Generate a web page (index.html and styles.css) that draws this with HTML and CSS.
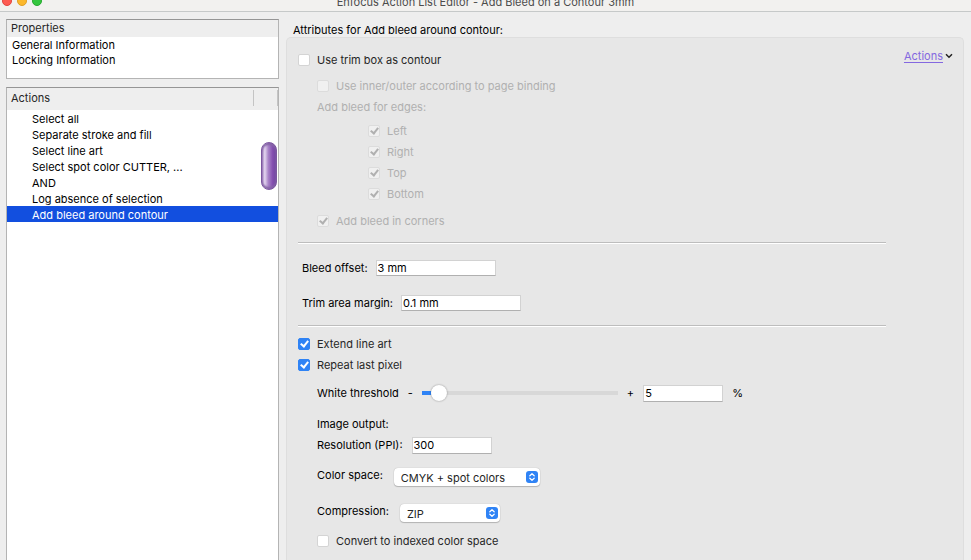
FILE: index.html
```html
<!DOCTYPE html>
<html lang="en">
<head>
    <meta charset="UTF-8">
    <meta name="viewport" content="width=device-width, initial-scale=1.0">
    <title>Enfocus Action List Editor - Add Bleed on a Contour 3mm</title>
    <link rel="stylesheet" href="styles.css">
</head>

<body>
    <!-- Title Bar -->
    <header class="titlebar">
        <div class="lights">
            <span class="light red"></span>
            <span class="light yellow"></span>
            <span class="light green"></span>
        </div>
        <h1>Enfocus Action List Editor - Add Bleed on a Contour 3mm</h1>
    </header>

    <div class="window">
        <!-- Left Side -->
        <aside class="sidebar">
            <section class="list properties">
                <h2 class="list-header">Properties</h2>
                <ul>
                    <li>General Information</li>
                    <li>Locking Information</li>
                </ul>
            </section>

            <section class="list actions">
                <h2 class="list-header">Actions</h2>
                <ul>
                    <li>Select all</li>
                    <li>Separate stroke and fill</li>
                    <li>Select line art</li>
                    <li>Select spot color CUTTER, ...</li>
                    <li>AND</li>
                    <li>Log absence of selection</li>
                    <li class="selected">Add bleed around contour</li>
                </ul>
                <div class="scroll-thumb"></div>
            </section>
        </aside>

        <!-- Attributes -->
        <main class="attributes">
            <h2>Attributes for Add bleed around contour:</h2>

            <form class="panel">
                <div class="row top">
                    <label class="check"><input type="checkbox"> Use trim box as contour</label>
                    <a class="menu-link" href="#actions"><span>Actions</span><svg width="8" height="6" viewBox="0 0 8 6"><path d="M1 1.2 L4 4.2 L7 1.2" fill="none" stroke="#222" stroke-width="1.5"/></svg></a>
                </div>

                <div class="group indent disabled">
                    <label class="check"><input type="checkbox" disabled> Use inner/outer according to page binding</label>
                    <p class="row">Add bleed for edges:</p>
                </div>
                <div class="group edges disabled">
                    <label class="check"><input type="checkbox" checked disabled> Left</label>
                    <label class="check"><input type="checkbox" checked disabled> Right</label>
                    <label class="check"><input type="checkbox" checked disabled> Top</label>
                    <label class="check"><input type="checkbox" checked disabled> Bottom</label>
                </div>
                <div class="group indent corners disabled">
                    <label class="check"><input type="checkbox" checked disabled> Add bleed in corners</label>
                </div>

                <hr>

                <div class="group offsets">
                    <div class="row">
                        <label for="offset">Bleed offset:</label>
                        <input class="field wide" type="text" id="offset" value="3 mm">
                    </div>
                    <div class="row">
                        <label for="margin">Trim area margin:</label>
                        <input class="field wide" type="text" id="margin" value="0.1 mm">
                    </div>
                </div>

                <hr>

                <div class="group">
                    <label class="check"><input type="checkbox" checked> Extend line art</label>
                    <label class="check"><input type="checkbox" checked> Repeat last pixel</label>
                </div>

                <div class="row threshold">
                    <label for="threshold">White threshold</label>
                    <span>-</span>
                    <input class="slider" type="range" id="threshold" min="0" max="100" value="5">
                    <span>+</span>
                    <input class="field" type="text" aria-label="White threshold percentage" value="5">
                    <span>%</span>
                </div>

                <div class="group indent output">
                    <p class="row">Image output:</p>
                    <div class="row">
                        <label for="resolution">Resolution (PPI):</label>
                        <input class="field" type="text" id="resolution" value="300">
                    </div>
                </div>

                <div class="group indent selects">
                    <div class="row">
                        <label for="space">Color space:</label>
                        <div class="select space">
                            <select id="space">
                                <option>CMYK + spot colors</option>
                            </select>
                            <svg width="12" height="12" viewBox="0 0 12 12"><rect width="12" height="12" rx="3" fill="#2f83f5"/><path d="M3.8 4.8 L6 2.7 L8.2 4.8 M3.8 7.2 L6 9.3 L8.2 7.2" fill="none" stroke="#fff" stroke-width="1.2" stroke-linecap="round" stroke-linejoin="round"/></svg>
                        </div>
                    </div>
                    <div class="row">
                        <label for="compression">Compression:</label>
                        <div class="select compression">
                            <select id="compression">
                                <option>ZIP</option>
                            </select>
                            <svg width="12" height="12" viewBox="0 0 12 12"><rect width="12" height="12" rx="3" fill="#2f83f5"/><path d="M3.8 4.8 L6 2.7 L8.2 4.8 M3.8 7.2 L6 9.3 L8.2 7.2" fill="none" stroke="#fff" stroke-width="1.2" stroke-linecap="round" stroke-linejoin="round"/></svg>
                        </div>
                    </div>
                </div>

                <div class="group indent indexed">
                    <label class="check"><input type="checkbox"> Convert to indexed color space</label>
                </div>
            </form>
        </main>
    </div>
</body>
</html>
```
FILE: styles.css
```css
/* General Styles */
* {
    box-sizing: border-box;
}

body {
    display: flex;
    flex-direction: column;
    height: 100vh;
    margin: 0;
    overflow: hidden;
    background-color: #eeeeee;
    color: #000;
    font-family: Inter, "Liberation Sans", sans-serif;
    font-size: 11px;
    line-height: 16px;
}

h1, h2, p, ul {
    margin: 0;
    padding: 0;
    font-size: 11px;
    font-weight: 400;
}

ul {
    list-style: none;
}

input, select {
    margin: 0;
    font: inherit;
    color: inherit;
}

/* Title Bar */
.titlebar {
    display: grid;
    grid-template-columns: 1fr auto 1fr;
    align-content: end;
    align-items: end;
    flex: none;
    height: 12px;
    padding: 0 2px;
    background-color: #f2f1ef;
    border-bottom: 1px solid #c6c9c9;
    overflow: hidden;
}

.titlebar h1 {
    padding-bottom: 1px;
    color: #4c4c4c;
}

.lights {
    display: flex;
    gap: 5px;
    padding-bottom: 5px;
}

.light {
    width: 10px;
    height: 10px;
    border-radius: 50%;
}

.red {
    background-color: #fe5b52;
    border: 1px solid #e2463e;
}

.yellow {
    background-color: #fcb82b;
    border: 1px solid #e0a025;
}

.green {
    background-color: #35c63f;
    border: 1px solid #28a930;
}

.window {
    display: flex;
    flex: 1;
    gap: 7px;
    min-height: 0;
    padding: 7px 7px 0 6px;
}

/* Left Side */
.sidebar {
    display: flex;
    flex-direction: column;
    flex: 0 0 273px;
    gap: 8px;
}

.list {
    position: relative;
    background-color: #fff;
    border: 1px solid #b4b4b4;
    border-top-color: #959595;
}

.list-header {
    padding: 0 4px;
    background-color: #eeeeee;
    color: #262626;
}

.properties {
    height: 60px;
}

.properties .list-header {
    line-height: 17px;
}

.properties ul {
    padding-top: 1px;
}

.properties li {
    padding: 0 5px;
    line-height: 15px;
}

.actions {
    flex: 1;
    border-bottom: 0;
}

.actions .list-header {
    display: flex;
    justify-content: space-between;
    padding: 2px 0 4px 4px;
    line-height: 16px;
}

.actions .list-header::after {
    content: "";
    width: 23px;
    border: 1px solid #c4c4c4;
    border-width: 0 1px;
}

.actions li {
    padding: 2px 25px 0;
    line-height: 14px;
}

.actions .selected {
    background-color: #124fdf;
    color: #fff;
}

.scroll-thumb {
    position: absolute;
    top: 54px;
    right: 1px;
    width: 16px;
    height: 48px;
    border: 1px solid #7c569f;
    border-radius: 8px;
    background: linear-gradient(to right, #a98bc6, #e4d6f0 20%, #a883c8 45%, #8550b0 75%, #7044a0);
    box-shadow: inset 0 2px 2px #8565a6, inset 0 -2px 2px #8565a6;
}

/* Attributes */
.attributes {
    display: flex;
    flex-direction: column;
    flex: 1;
    padding-top: 4px;
}

.attributes h2 {
    padding-left: 7px;
    line-height: 14px;
}

.panel {
    flex: 1;
    padding: 12px 10px 0 11px;
    background-color: #e7e7e7;
    border: 1px solid #dedede;
    border-bottom: 0;
    border-radius: 5px 5px 0 0;
}

.row, .check {
    display: flex;
    align-items: center;
    gap: 8px;
    height: 20px;
}

.group {
    display: flex;
    flex-direction: column;
    align-items: flex-start;
    gap: 1px;
}

.indent {
    padding-left: 19px;
}

.check {
    gap: 7px;
    color: #262626;
}

.top {
    justify-content: space-between;
    margin-bottom: 6px;
}

.menu-link {
    display: flex;
    align-items: center;
    align-self: flex-start;
    gap: 2px;
    height: 12px;
    color: #8468e0;
    text-decoration: none;
}

.menu-link span {
    text-decoration: underline;
    text-underline-offset: 2px;
}

.disabled, .disabled .check {
    color: #b0b0b0;
}

.edges {
    padding: 4px 0 7px 70px;
}

hr {
    width: 588px;
    max-width: 100%;
    height: 2px;
    margin: 0;
    border: 0;
    border-top: 1px solid #bdbdbd;
    background-color: #fff;
}

.corners {
    margin-bottom: 11px;
}

.offsets {
    gap: 15px;
    padding: 14px 4px 12px;
}

hr + .group:not(.offsets) {
    padding-top: 7px;
}

.threshold {
    gap: 9px;
    margin-top: 8px;
    padding-left: 19px;
}

.output {
    padding-top: 11px;
}

.output .row {
    gap: 9px;
}

.selects {
    gap: 16px;
    padding-top: 12px;
}

.selects .row {
    gap: 11px;
}

.selects label {
    align-self: flex-start;
}

.indexed {
    padding-top: 8px;
}

/* Controls */
input[type="checkbox"] {
    appearance: none;
    width: 12px;
    height: 12px;
    background-color: #fff;
    border: 1px solid #d4d4d4;
    border-radius: 2px;
}

input[type="checkbox"]:checked {
    display: grid;
    place-items: center;
    background-color: #2f83f5;
    border-color: #2f83f5;
}

input[type="checkbox"]:checked::before {
    content: "";
    box-sizing: border-box;
    width: 5px;
    height: 8px;
    margin-bottom: 2px;
    border: solid #fff;
    border-width: 0 2px 2px 0;
    transform: rotate(38deg);
}

input[type="checkbox"]:disabled {
    background-color: #f0f0f0;
    border-color: #dcdcdc;
}

input[type="checkbox"]:disabled::before {
    border-color: #b0b0b0;
}

.field {
    width: 80px;
    height: 17px;
    padding: 0 1px;
    background-color: #fff;
    border: 1px solid #d2d2d2;
    border-bottom-color: #b0b0b0;
}

.wide {
    width: 120px;
    height: 16px;
}

.slider {
    appearance: none;
    width: 196px;
    height: 16px;
    background: linear-gradient(to right, #2f83f5 9px, #d8d8d8 9px) center / 100% 4px no-repeat;
}

.slider::-webkit-slider-thumb {
    appearance: none;
    width: 16px;
    height: 16px;
    background-color: #fff;
    border-radius: 50%;
    box-shadow: 0 0 2px rgba(0, 0, 0, 0.4);
}

.select {
    position: relative;
    height: 18px;
}

.select select {
    appearance: none;
    width: 100%;
    height: 18px;
    padding: 1px 20px 0 7px;
    background-color: #fff;
    border: 0;
    border-radius: 4px;
    box-shadow: 0 0 1px rgba(0, 0, 0, 0.3), 0 1px 1px rgba(0, 0, 0, 0.2);
    color: #262626;
}

.select svg {
    position: absolute;
    top: 3px;
    right: 2px;
}

.space {
    width: 146px;
}

.compression {
    width: 100px;
}
```
